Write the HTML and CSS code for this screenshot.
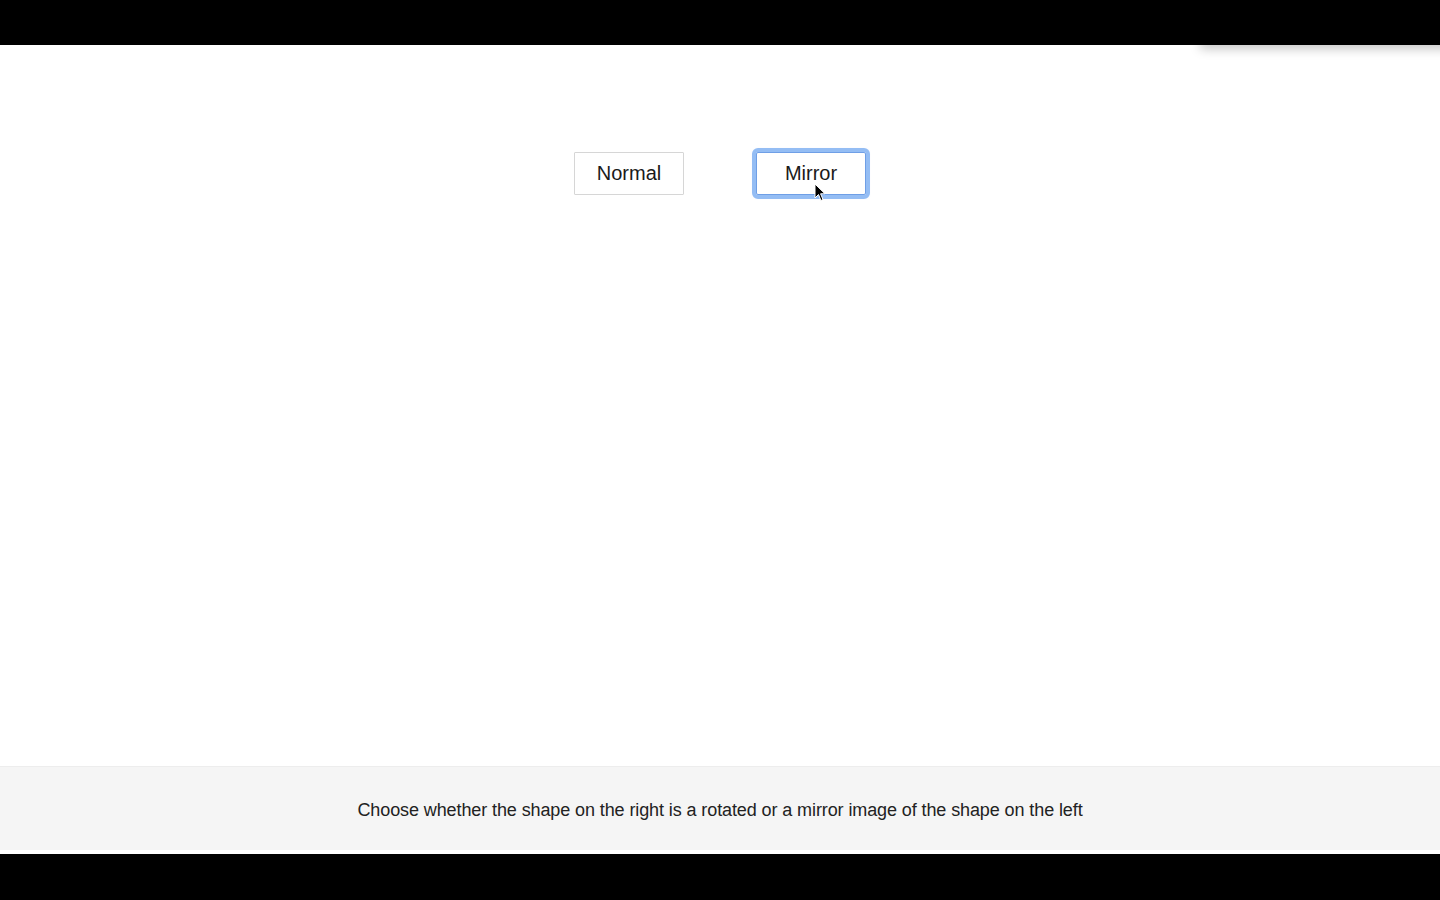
FILE: index.html
```html
<!DOCTYPE html>
<html>
<head>
<meta charset="utf-8">
<link rel="stylesheet" href="styles.css">
</head>
<body>
<div class="frame">
  <div class="topbar"></div>
  <div class="panel-shadow"></div>
  <main class="stage">
    <div class="choices">
      <button class="choice">Normal</button>
      <button class="choice focused">Mirror</button>
    </div>
  </main>
  <footer class="instructions">
    <p>Choose whether the shape on the right is a rotated or a mirror image of the shape on the left</p>
  </footer>
  <div class="gap"></div>
  <div class="bottombar"></div>
  <svg class="cursor" width="12" height="19" viewBox="0 0 12 19">
    <path d="M1 1 L1 15 L4.5 11.5 L7 17.5 L9 16.6 L6.6 10.8 L11 10.8 Z" fill="#000" stroke="#fff" stroke-width="1"/>
  </svg>
</div>
</body>
</html>
```
FILE: styles.css
```css
html, body {
  margin: 0;
  padding: 0;
  background: #000;
}
.frame {
  position: relative;
  width: 1440px;
  height: 900px;
  display: flex;
  flex-direction: column;
  overflow: hidden;
  font-family: "Liberation Sans", Arial, sans-serif;
}
.topbar {
  height: 45px;
  background: #000;
  flex: none;
  position: relative;
  z-index: 2;
}
.panel-shadow {
  position: absolute;
  top: 10px;
  left: 1200px;
  width: 300px;
  height: 35px;
  background: #000;
  box-shadow: 0 4px 10px rgba(0,0,0,0.22);
  z-index: 1;
}
.stage {
  flex: 1;
  background: #fff;
}
.choices {
  display: flex;
  justify-content: center;
  gap: 72px;
  padding-top: 107px;
}
.choice {
  width: 110px;
  height: 43px;
  box-sizing: border-box;
  background: #fff;
  border: 1px solid #d6d6d6;
  border-radius: 1px;
  font-family: "Liberation Sans", Arial, sans-serif;
  font-size: 20px;
  color: #1a1a1a;
  padding: 0;
  line-height: 41px;
}
.choice.focused {
  border-color: #6f9fe6;
  outline: 4px solid #94bdf4;
  outline-offset: 0;
  border-radius: 2px;
  box-shadow: 0 0 3px 2px rgba(90,140,230,0.35);
}
.instructions {
  flex: none;
  height: 84px;
  box-sizing: border-box;
  background: #f5f5f5;
  border-top: 1px solid #ededed;
  display: flex;
  align-items: center;
  justify-content: center;
}
.instructions p {
  margin: 0;
  font-size: 18px;
  color: #222;
  letter-spacing: -0.1px;
  transform: translateY(2px);
}
.gap {
  flex: none;
  height: 4px;
  background: #fff;
}
.bottombar {
  flex: none;
  height: 46px;
  background: #000;
}
.cursor {
  position: absolute;
  left: 814px;
  top: 183px;
}
```
